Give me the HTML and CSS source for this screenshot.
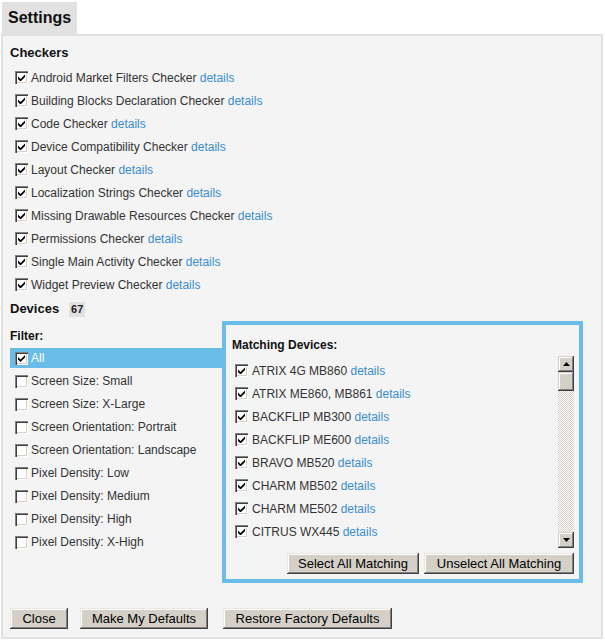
FILE: index.html
```html
<!DOCTYPE html>
<html>
<head>
<meta charset="utf-8">
<title>Settings</title>
<link rel="stylesheet" href="styles.css">
</head>
<body>
<div class="tab">Settings</div>
<div class="panel">
  <h2 class="h-checkers">Checkers</h2>
  <ul class="checkers">
    <li class="row"><span class="cb on"></span><span class="lbl">Android Market Filters Checker <a class="det">details</a></span></li>
    <li class="row"><span class="cb on"></span><span class="lbl">Building Blocks Declaration Checker <a class="det">details</a></span></li>
    <li class="row"><span class="cb on"></span><span class="lbl">Code Checker <a class="det">details</a></span></li>
    <li class="row"><span class="cb on"></span><span class="lbl">Device Compatibility Checker <a class="det">details</a></span></li>
    <li class="row"><span class="cb on"></span><span class="lbl">Layout Checker <a class="det">details</a></span></li>
    <li class="row"><span class="cb on"></span><span class="lbl">Localization Strings Checker <a class="det">details</a></span></li>
    <li class="row"><span class="cb on"></span><span class="lbl">Missing Drawable Resources Checker <a class="det">details</a></span></li>
    <li class="row"><span class="cb on"></span><span class="lbl">Permissions Checker <a class="det">details</a></span></li>
    <li class="row"><span class="cb on"></span><span class="lbl">Single Main Activity Checker <a class="det">details</a></span></li>
    <li class="row"><span class="cb on"></span><span class="lbl">Widget Preview Checker <a class="det">details</a></span></li>
  </ul>
  <div class="devices-head"><h2 class="h-devices">Devices</h2><span class="badge">67</span></div>
  <div class="devices">
    <div class="filter">
      <div class="filter-title">Filter:</div>
      <ul class="filter-list">
        <li class="frow sel"><span class="cb on"></span><span class="lbl">All</span></li>
        <li class="frow"><span class="cb"></span><span class="lbl">Screen Size: Small</span></li>
        <li class="frow"><span class="cb"></span><span class="lbl">Screen Size: X-Large</span></li>
        <li class="frow"><span class="cb"></span><span class="lbl">Screen Orientation: Portrait</span></li>
        <li class="frow"><span class="cb"></span><span class="lbl">Screen Orientation: Landscape</span></li>
        <li class="frow"><span class="cb"></span><span class="lbl">Pixel Density: Low</span></li>
        <li class="frow"><span class="cb"></span><span class="lbl">Pixel Density: Medium</span></li>
        <li class="frow"><span class="cb"></span><span class="lbl">Pixel Density: High</span></li>
        <li class="frow"><span class="cb"></span><span class="lbl">Pixel Density: X-High</span></li>
      </ul>
    </div>
    <div class="matching">
      <div class="m-title">Matching Devices:</div>
      <div class="listbox">
        <ul class="dlist">
          <li class="drow"><span class="cb on"></span><span class="lbl">ATRIX 4G MB860 <a class="det">details</a></span></li>
          <li class="drow"><span class="cb on"></span><span class="lbl">ATRIX ME860, MB861 <a class="det">details</a></span></li>
          <li class="drow"><span class="cb on"></span><span class="lbl">BACKFLIP MB300 <a class="det">details</a></span></li>
          <li class="drow"><span class="cb on"></span><span class="lbl">BACKFLIP ME600 <a class="det">details</a></span></li>
          <li class="drow"><span class="cb on"></span><span class="lbl">BRAVO MB520 <a class="det">details</a></span></li>
          <li class="drow"><span class="cb on"></span><span class="lbl">CHARM MB502 <a class="det">details</a></span></li>
          <li class="drow"><span class="cb on"></span><span class="lbl">CHARM ME502 <a class="det">details</a></span></li>
          <li class="drow"><span class="cb on"></span><span class="lbl">CITRUS WX445 <a class="det">details</a></span></li>
          <li class="drow"><span class="cb on"></span><span class="lbl">CLIQ 2 MB611 <a class="det">details</a></span></li>
          <li class="drow"><span class="cb on"></span><span class="lbl">CLIQ MB200 <a class="det">details</a></span></li>
        </ul>
        <div class="scrollbar">
          <div class="sb-btn"><svg width="7" height="4" viewBox="0 0 7 4"><path d="M3.5 0 L7 4 L0 4 Z" fill="#000"/></svg></div>
          <div class="sb-thumb"></div>
          <div class="sb-track"></div>
          <div class="sb-btn"><svg width="7" height="4" viewBox="0 0 7 4"><path d="M0 0 L7 0 L3.5 4 Z" fill="#000"/></svg></div>
        </div>
      </div>
      <div class="m-buttons">
        <button class="btn btn-sel">Select All Matching</button>
        <button class="btn btn-unsel">Unselect All Matching</button>
      </div>
    </div>
  </div>
  <div class="footer">
    <button class="btn btn-close">Close</button>
    <button class="btn btn-make">Make My Defaults</button>
    <button class="btn btn-restore">Restore Factory Defaults</button>
  </div>
</div>
</body>
</html>
```
FILE: styles.css
```css
* { box-sizing: border-box; }
html, body { margin: 0; padding: 0; background: #fff; }
body {
  font-family: "Liberation Sans", Arial, sans-serif;
  font-size: 12px;
  color: #333;
}
ul { list-style: none; margin: 0; padding: 0; }
h2 { margin: 0; }

.tab {
  margin: 2px 0 0 2px;
  width: 75px;
  height: 32px;
  background: #e1e1e1;
  font-size: 16px;
  font-weight: bold;
  color: #111;
  line-height: 32px;
  padding-left: 6px;
}

.panel {
  margin: 0 2px 0 1px;
  border: 2px solid #e1e1e1;
  background: #f4f4f4;
  padding: 9px 0 8px 7px;
}

.h-checkers {
  font-size: 13px;
  line-height: 16px;
  color: #111;
}

.checkers { margin-top: 5px; padding-left: 5px; }
.row {
  height: 23px;
  display: flex;
  align-items: center;
}

.cb {
  position: relative;
  display: inline-block;
  flex: none;
  width: 13px;
  height: 13px;
  background: #fff;
  box-shadow: inset 1px 1px #808080, inset 2px 2px #404040, inset -1px -1px #fff, inset -2px -2px #d4d0c8;
}
.cb.on::after {
  content: "";
  position: absolute;
  left: 3px;
  top: 3px;
  width: 7px;
  height: 7px;
  background: #000;
  clip-path: polygon(0 2.5px, 2.5px 5px, 7px 0.5px, 7px 3px, 2.5px 7.5px, 0 5px);
}
.lbl { margin-left: 3px; white-space: nowrap; }
.det { color: #3a8dcc; text-decoration: none; }

.devices-head {
  margin-top: 3px;
  height: 20px;
  display: flex;
  align-items: center;
}
.h-devices {
  font-size: 13px;
  line-height: 16px;
  color: #111;
}
.badge {
  margin-left: 10px;
  width: 16px;
  height: 15px;
  background: #e1e1e1;
  font-size: 11px;
  font-weight: bold;
  color: #222;
  display: flex;
  align-items: center;
  justify-content: center;
}

.devices {
  margin-top: 2px;
  display: flex;
  align-items: flex-start;
}
.filter {
  width: 212px;
  padding-top: 7px;
}
.filter-title, .m-title {
  font-size: 12px;
  font-weight: bold;
  line-height: 16px;
  color: #111;
}
.filter-list { margin-top: 4px; }
.frow {
  height: 20px;
  margin-bottom: 3px;
  padding-left: 5px;
  display: flex;
  align-items: center;
}
.frow.sel { background: #6bbde9; color: #fff; }

.matching {
  width: 361px;
  height: 262px;
  border: 4px solid #6bbde9;
  padding: 12px 5px 5px 6px;
}
.listbox {
  margin-top: 3px;
  height: 192px;
  display: flex;
  overflow: hidden;
}
.dlist {
  flex: 1;
  padding-top: 3px;
  overflow: hidden;
}
.drow {
  height: 23px;
  padding-left: 3px;
  display: flex;
  align-items: center;
}
.drow .lbl { margin-left: 4px; }

.scrollbar {
  width: 16px;
  display: flex;
  flex-direction: column;
}
.sb-btn, .sb-thumb {
  flex: none;
  background: #d4d0c8;
  box-shadow: inset -1px -1px #404040, inset 1px 1px #d4d0c8, inset -2px -2px #808080, inset 2px 2px #fff;
}
.sb-btn {
  height: 16px;
  display: flex;
  align-items: center;
  justify-content: center;
}
.sb-thumb { height: 19px; }
.sb-track {
  flex: 1;
  background: repeating-conic-gradient(#d4d0c8 0 25%, #fff 0 50%) 0 0 / 2px 2px;
}

.m-buttons {
  margin-top: 5px;
  display: flex;
  justify-content: flex-end;
  gap: 5px;
}
.btn {
  font-family: "Liberation Sans", Arial, sans-serif;
  font-size: 13px;
  line-height: 15px;
  color: #000;
  height: 21px;
  padding: 0;
  border: none;
  background: #d4d0c8;
  white-space: nowrap;
  text-align: center;
  box-shadow: inset -1px -1px #404040, inset 1px 1px #e8e6e1, inset -2px -2px #808080, inset 2px 2px #fff;
}
.btn-sel { width: 132px; }
.btn-unsel { width: 150px; }

.footer {
  margin-top: 25px;
  display: flex;
}
.btn-close { width: 58px; }
.btn-make { width: 128px; margin-left: 12px; }
.btn-restore { width: 169px; margin-left: 15px; }
```
